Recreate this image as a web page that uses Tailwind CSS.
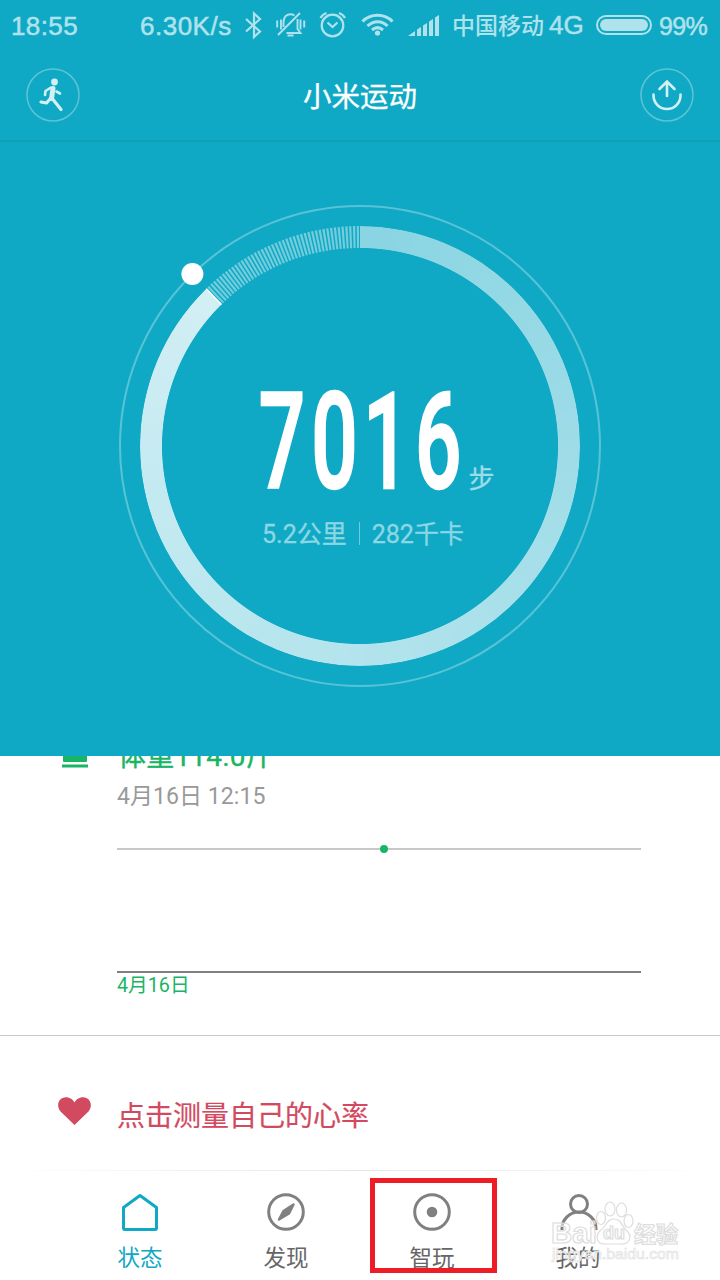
<!DOCTYPE html>
<html lang="zh-CN">
  <head>
    <meta charset="UTF-8" />
    <title>小米运动</title>
    <script src="https://cdn.jsdelivr.net/npm/@tailwindcss/browser@4"></script>
  </head>
  <body class="w-[720px] h-[1280px] overflow-hidden bg-white flex flex-col font-[Roboto,'Noto_Sans_CJK_SC',sans-serif]">
    <!-- Top panel -->
    <section class="relative z-10 h-[756px] shrink-0 bg-[#10a9c5] text-white">
      <!-- Status bar -->
      <div class="h-[50px] flex items-center text-[#b0e2ec] font-['Liberation_Sans','Noto_Sans_CJK_SC',sans-serif] text-[26px] leading-[50px] whitespace-nowrap [-webkit-text-stroke:0.5px_#b0e2ec]">
        <span class="w-[140px] pl-[11px] pt-[2px] tracking-[0.4px]">18:55</span>
        <span class="w-[103px] pt-[2px] tracking-[0.5px]">6.30K/s</span>
        <svg class="w-[204px] h-[50px] shrink-0" viewBox="243 0 204 50" fill="none" stroke="currentColor" stroke-width="2.2">
          <path d="M246 19l14 12.500-6 5.500V13.500l6 5.500-14 12.500" />
          <path d="M278 35l22-22M277.200 20.500v7M281 19.500v10M300.500 19.500v10M304.200 20.500v7M283.500 27v-4c0-9 7-10 11-7.500M297.500 19v10l3 4h-14M287.500 35.500h6" stroke-width="1.900" />
          <circle cx="332.500" cy="25.500" r="10.800" />
          <path d="M327.500 22.500l5 4.500 5-4.500M320.500 18c1-2 3-4 6-5M345 18c-1-2-3-4-6-5" />
          <path d="M362.500 21.500c8-8.300 22-8.300 30 0M367.500 26c6-5.700 14.500-5.700 20 0M372 30c3.500-3 7.500-3 11 0" stroke-width="3" />
          <circle cx="377.500" cy="33" r="2.600" fill="currentColor" stroke="none" />
          <path d="M408 36l7-5v5zM417 29.500l4-2.500v9h-4zM423 25.500l4-2.500v13h-4zM429 21.500l4-2.500v17h-4zM435 17.500l4-2.500v21h-4z" fill="currentColor" stroke="none" />
        </svg>
        <span class="w-[149px] pl-[5px] flex">
          <span class="text-[23px] font-medium pt-[2px] [-webkit-text-stroke:0px]">中国移动</span>
          <span class="pl-[5px] pt-[1px]">4G</span>
        </span>
        <span class="w-14 h-5 shrink-0 rounded-full border-2 border-[#b0e2ec] p-[2px]">
          <span class="block h-full rounded-full bg-[#b0e2ec]"></span>
        </span>
        <span class="pl-[7px] pt-[2px] text-[25px] tracking-[-0.6px]">99%</span>
      </div>

      <!-- Title bar -->
      <header class="h-[92px] flex items-center justify-between px-[26px] border-b-2 border-[#0e9eb8]">
        <svg class="w-[54px] h-[54px]" viewBox="0 0 54 54" fill="none" stroke="#d3f0f5" stroke-linecap="round" stroke-linejoin="round">
          <circle cx="27" cy="27" r="26" stroke="#5bc4d7" stroke-width="1.500" />
          <circle cx="28.500" cy="14" r="3.400" fill="#d3f0f5" stroke="none" />
          <path d="M27 20.500l-1.500 10" stroke-width="5" />
          <path d="M25 19.500l-5.500 3.500-.5 4M30.500 23.500l3.500 2" stroke-width="2.600" />
          <path d="M27 31.500l8 10M24 31l-3.500 4-5.500-1" stroke-width="3.200" />
        </svg>
        <h1 class="text-[28.5px] leading-none font-normal font-['Noto_Sans_CJK_SC',sans-serif] [-webkit-text-stroke:0.3px_white]">小米运动</h1>
        <svg class="w-[54px] h-[54px]" viewBox="0 0 54 54" fill="none" stroke="#d3f0f5" stroke-width="2.600" stroke-linecap="round">
          <circle cx="27" cy="27" r="26" stroke="#5bc4d7" stroke-width="1.500" />
          <path d="M13.500 26.500v1a13.500 13.500 0 0 0 27 0v-1M27 28V14M19.500 21l7.500-7.500 7.500 7.500" />
        </svg>
      </header>

      <!-- Step ring -->
      <div class="relative mx-auto mt-[62px] size-[484px]">
        <div class="absolute inset-[22px] rounded-full bg-[conic-gradient(rgb(255_255_255/0.51)_0deg,rgb(255_255_255/0.81)_315.700deg,transparent_315.700deg)] [mask-image:radial-gradient(circle,transparent_197.600px,black_198.400px)]"></div>
        <svg class="absolute inset-0 size-full" viewBox="-242 -242 484 484" fill="none">
          <circle r="240" stroke="#58c3d6" stroke-width="2" />
          <path d="M-1 -209A209 209 0 0 0 -146 -149.600" stroke="white" stroke-opacity=".42" stroke-width="22" stroke-dasharray="2.150 1.500" />
          <path d="M-138.500 -141.500L-153.700 -157.300" stroke="white" stroke-width="1.500" />
          <circle cx="-167.600" cy="-172" r="11" fill="white" />
          <text class="font-[Roboto,sans-serif] font-medium" fill="white" stroke="white" stroke-width="2.400" font-size="134" transform="scale(.61 1)" x="-166 -80 5 90" y="41.500">7016</text>
        </svg>
        <div class="relative flex flex-col items-center pt-[259px] font-[Roboto,'Noto_Sans_CJK_SC',sans-serif]">
          <p class="pl-[243px] text-[26px] leading-8 text-[#9fdce8] [-webkit-text-stroke:0.3px_#9fdce8]">步</p>
          <p class="relative mt-[24px] pl-[6px] flex items-center text-[25px] leading-8 text-[#8dd7e4] [-webkit-text-stroke:0.3px_#8dd7e4]">
            <span>5.2公里</span>
            <span class="mx-3 -mt-1 h-[23px] w-px bg-[#6fcbdc]"></span>
            <span>282千卡</span>
          </p>
        </div>
      </div>
    </section>

    <!-- Weight card, scrolled partly under the panel -->
    <section class="-mt-4 h-[296px] shrink-0 border-b border-[#c8c8c8] flex pr-[79px]">
      <svg class="w-[117px] h-[30px] shrink-0" viewBox="0 0 117 30" fill="#19b566">
        <path d="M63 8h24v13q0 1-1 1H64q-1 0-1-1zM62 24.500h26v3H62z" />
      </svg>
      <div class="flex-1">
        <h2 class="pl-px text-[28px] leading-[33px] tracking-[0.2px] font-normal text-[#19b566] [-webkit-text-stroke:0.4px_#19b566]">体重114.0斤</h2>
        <p class="mt-[9px] text-[23.100px] leading-[30px] text-[#999]">4月16日 12:15</p>
        <div class="relative mt-[36px] h-[125px] border-t-2 border-b-2 border-t-[#c8c8c8] border-b-[#808080]">
          <span class="absolute -top-[5px] left-[263px] size-2 rounded-full bg-[#19b566]"></span>
        </div>
        <p class="text-[19.700px] leading-[25px] text-[#19b566]">4月16日</p>
      </div>
    </section>

    <!-- Heart rate -->
    <section class="h-[134px] shrink-0 flex items-center pt-[26px] pl-[57px] text-[#d24a60]">
      <svg class="w-[35px] h-[30px] -mt-[11px]" viewBox="0 0 35 30" fill="currentColor">
        <path d="M17.500 29L3.500 15.500C-1 10 1 1.500 9 1.200c4 0 7 2.300 8.500 5.300 1.500-3 4.500-5.300 8.500-5.300 8 .3 10 8.800 5.500 14.300z" />
      </svg>
      <p class="ml-[25px] pt-px text-[28px] leading-10 [-webkit-text-stroke:0.2px_#d24a60]">点击测量自己的心率</p>
    </section>

    <!-- Tab bar -->
    <nav class="relative h-[110px] shrink-0 flex pl-[67px] text-[22.5px] leading-7 text-[#666]">
      <span class="absolute inset-x-0 top-0 h-px bg-linear-to-r from-transparent via-[#e6e6e6] via-50% to-transparent"></span>
      <a class="w-[146px] flex flex-col items-center pt-[22px] text-[#10a9c5]">
        <svg class="size-10" viewBox="0 0 40 40" fill="none" stroke="currentColor" stroke-width="3" stroke-linejoin="round">
          <path d="M3.500 15.500L20 3.500l16.500 12V36q0 1.500-1.500 1.500H5Q3.500 37.500 3.500 36z" />
        </svg>
        <span class="mt-3">状态</span>
      </a>
      <a class="w-[146px] flex flex-col items-center pt-[22px]">
        <svg class="size-10" viewBox="0 0 40 40" fill="none" stroke="#808080" stroke-width="3">
          <circle cx="20" cy="20" r="17.300" />
          <path d="M27.500 12.500L23 21.500l-10 6 4.500-8.500z" fill="#808080" stroke-width="2.500" stroke-linejoin="round" />
        </svg>
        <span class="mt-3">发现</span>
      </a>
      <a class="relative w-[146px] flex flex-col items-center pt-[22px]">
        <svg class="size-10" viewBox="0 0 40 40" fill="none" stroke="#808080" stroke-width="3">
          <circle cx="20" cy="20" r="17.300" />
          <circle cx="20" cy="20" r="5.300" fill="#808080" stroke="none" />
        </svg>
        <span class="mt-3">智玩</span>
        <span class="absolute left-[11px] top-2 w-[127px] h-[95px] border-[5px] border-[#ee1c25]"></span>
      </a>
      <a class="w-[146px] flex flex-col items-center pt-[22px]">
        <svg class="size-10" viewBox="0 0 40 40" fill="none" stroke="#808080" stroke-width="3">
          <circle cx="21" cy="12" r="8.500" />
          <path d="M4 38v-1.500a17 16.500 0 0 1 34 0V38" />
        </svg>
        <span class="mt-3">我的</span>
      </a>

      <!-- Watermark -->
      <svg class="absolute left-[545px] top-[25px] w-[145px] h-[75px] font-['Liberation_Sans','Noto_Sans_CJK_SC',sans-serif]" viewBox="545 1195 145 75" fill="white" fill-opacity=".55" stroke="#ddd" stroke-width="1.200">
        <g>
          <ellipse cx="601" cy="1218" rx="4.500" ry="6.500" />
          <ellipse cx="610" cy="1209" rx="5" ry="7" />
          <ellipse cx="621.500" cy="1210" rx="5" ry="7" />
          <ellipse cx="628.500" cy="1221" rx="4.500" ry="6.500" />
          <path d="M614 1219c7 0 8 7 12 11 7 6 4 15-6 14h-14c-9 1-12-8-5-14 5-4 6-11 13-11z" />
        </g>
        <text x="551" y="1243" font-size="30" font-weight="bold" textLength="46" lengthAdjust="spacingAndGlyphs">Bai</text>
        <text x="603" y="1239" font-size="18" font-weight="bold" textLength="22">du</text>
        <text x="634" y="1242" font-size="22" font-weight="bold" textLength="44">经验</text>
        <text x="552" y="1259" font-size="15" fill-opacity=".7" stroke="#e2e2e2" stroke-width=".700" textLength="127" lengthAdjust="spacingAndGlyphs">jingyan.baidu.com</text>
      </svg>
    </nav>
  </body>
</html>
